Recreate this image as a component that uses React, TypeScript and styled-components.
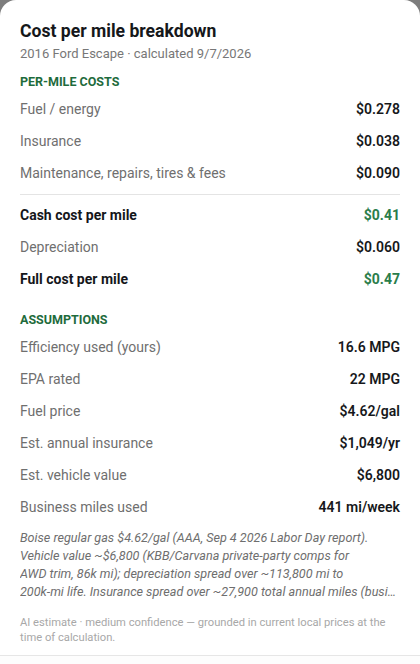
import * as React from 'react';
import styled, { createGlobalStyle } from 'styled-components';

const GlobalStyle = createGlobalStyle`
    html, body {
        margin: 0;
        padding: 0;
        background: #7d7d7d;
        font-family: Roboto, "Noto Sans", "Liberation Sans", sans-serif;
    }
`;

const Sheet = styled.div`
    box-sizing: border-box;
    height: 664px;
    overflow: hidden;
    background: #ffffff;
    border-radius: 16px 16px 0 0;
    display: flex;
    flex-direction: column;
`;

const Body = styled.div`
    padding: 19px 20px 10px;
`;

const Title = styled.h1`
    margin: 0;
    font-size: 17.6px;
    line-height: 24px;
    font-weight: 700;
    color: #15171a;
`;

const Subtitle = styled.div`
    margin-top: 1px;
    font-size: 13px;
    line-height: 20px;
    color: #777;
`;

const SectionTitle = styled.div<{ $top: number }>`
    margin-top: ${p => p.$top}px;
    margin-bottom: 3px;
    font-size: 12.5px;
    line-height: 16px;
    font-weight: 700;
    color: #1e6b3c;
`;

const Row = styled.div`
    display: flex;
    justify-content: space-between;
    align-items: center;
    height: 32px;
    font-size: 14px;
`;

const Label = styled.span<{ $strong?: boolean }>`
    color: ${p => (p.$strong ? '#14161a' : '#6f6f6f')};
    font-weight: ${p => (p.$strong ? 700 : 400)};
`;

const Value = styled.span<{ $green?: boolean }>`
    color: ${p => (p.$green ? '#2a7d4b' : '#16181b')};
    font-weight: ${p => (p.$green ? 700 : 600)};
`;

const Divider = styled.hr`
    border: 0;
    border-top: 1px solid #e4e4e4;
    margin: 5px 0 4px;
`;

// lines are broken by hand; break-all lets the clamped last line cut mid-word
const Note = styled.p`
    margin: 6px 0 0;
    font-size: 12.6px;
    line-height: 18px;
    font-style: italic;
    color: #6e6e6e;
    word-break: break-all;
    display: -webkit-box;
    -webkit-line-clamp: 4;
    -webkit-box-orient: vertical;
    overflow: hidden;
`;

const Footnote = styled.p`
    margin: 14px 0 0;
    font-size: 11.2px;
    line-height: 15px;
    color: #a8a8a8;
`;

const Footer = styled.div`
    flex: 1;
    border-top: 1px solid #e6e6e6;
    background: #fdfdfd;
`;

type Line = { label: string, value: string, strong?: boolean };

const perMile: Line[] = [
    { label: 'Fuel / energy', value: '$0.278' },
    { label: 'Insurance', value: '$0.038' },
    { label: 'Maintenance, repairs, tires & fees', value: '$0.090' },
];

const totals: Line[] = [
    { label: 'Cash cost per mile', value: '$0.41', strong: true },
    { label: 'Depreciation', value: '$0.060' },
    { label: 'Full cost per mile', value: '$0.47', strong: true },
];

const assumptions: Line[] = [
    { label: 'Efficiency used (yours)', value: '16.6 MPG' },
    { label: 'EPA rated', value: '22 MPG' },
    { label: 'Fuel price', value: '$4.62/gal' },
    { label: 'Est. annual insurance', value: '$1,049/yr' },
    { label: 'Est. vehicle value', value: '$6,800' },
    { label: 'Business miles used', value: '441 mi/week' },
];

function Rows(props: { lines: Line[] }) {
    return (
        <>
            {props.lines.map(l => (
                <Row key={l.label}>
                    <Label $strong={l.strong}>{l.label}</Label>
                    <Value $green={l.strong}>{l.value}</Value>
                </Row>
            ))}
        </>
    );
}

export default function App() {
    return (
        <>
            <GlobalStyle />
            <Sheet>
                <Body>
                    <Title>Cost per mile breakdown</Title>
                    <Subtitle>2016 Ford Escape · calculated 9/7/2026</Subtitle>

                    <SectionTitle $top={10}>PER-MILE COSTS</SectionTitle>
                    <Rows lines={perMile} />
                    <Divider />
                    <Rows lines={totals} />

                    <SectionTitle $top={17}>ASSUMPTIONS</SectionTitle>
                    <Rows lines={assumptions} />

                    <Note>
                        Boise regular gas $4.62/gal (AAA, Sep 4 2026 Labor Day report).<br />
                        Vehicle value ~$6,800 (KBB/Carvana private-party comps for<br />
                        AWD trim, 86k mi); depreciation spread over ~113,800 mi to<br />
                        200k-mi life. Insurance spread over ~27,900 total annual miles (business
                        and personal combined).
                    </Note>

                    <Footnote>
                        AI estimate · medium confidence — grounded in current local prices at the
                        time of calculation.
                    </Footnote>
                </Body>
                <Footer />
            </Sheet>
        </>
    );
}
